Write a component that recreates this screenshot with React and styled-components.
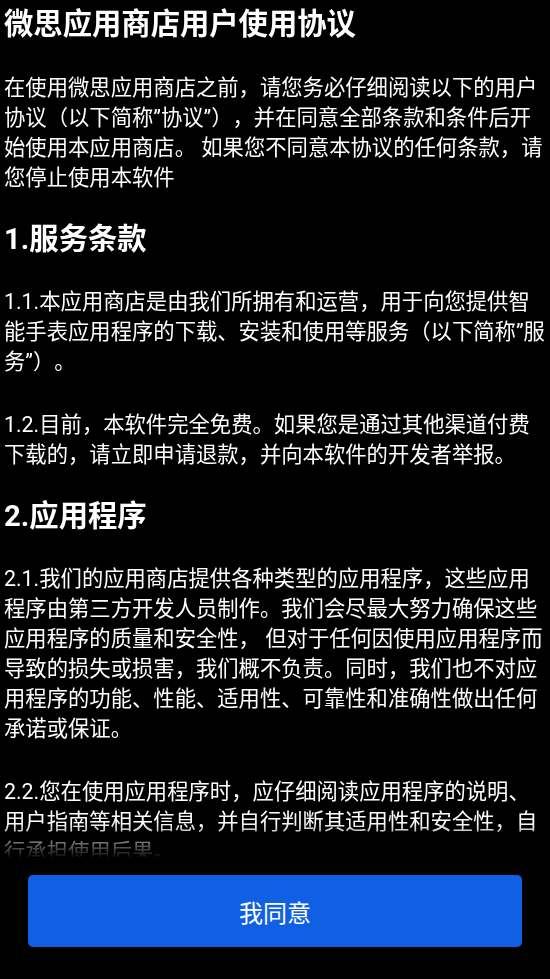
import React from "react";
import styled, { createGlobalStyle } from "styled-components";

const GlobalStyle = createGlobalStyle`
  html, body {
    margin: 0;
    padding: 0;
    background: #000;
  }
  body {
    font-family: Roboto, "Noto Sans CJK SC", sans-serif;
    color: #fff;
    text-spacing-trim: space-all;
  }
  * { box-sizing: border-box; }
`;

const Page = styled.div`
  width: 550px;
  height: 979px;
  display: flex;
  flex-direction: column;
  background: #000;
  overflow: hidden;
`;

const Content = styled.div`
  flex: 1;
  min-height: 0;
  overflow: hidden;
  padding: 0 5px 0 4px;
  text-spacing-trim: space-all;
  -webkit-mask-image: linear-gradient(to bottom, #000 calc(100% - 34px), rgba(0, 0, 0, 0.05) 100%);
  mask-image: linear-gradient(to bottom, #000 calc(100% - 34px), rgba(0, 0, 0, 0.05) 100%);
`;

const Title = styled.h1`
  margin: 4px 0 0;
  font-size: 29.33px;
  line-height: 40px;
  font-weight: 700;
  color: #fff;
`;

const Heading = styled.h2`
  margin: 26px 0 0;
  font-size: 29.33px;
  line-height: 40px;
  font-weight: 700;
  color: #fff;
`;

const Paragraph = styled.p`
  margin: 33px 0 0;
  font-size: 21.33px;
  line-height: 30px;
  font-weight: 400;
  color: #fff;

  ${Title} + & {
    margin-top: 29px;
  }
  ${Heading} + & {
    margin-top: 28px;
  }
`;

const Footer = styled.div`
  flex: none;
  padding: 18px 28px 32px;
`;

const AgreeButton = styled.button`
  display: flex;
  align-items: center;
  justify-content: center;
  width: 100%;
  height: 72px;
  border: none;
  border-radius: 5px;
  background: #1060e6;
  color: #fff;
  font-family: Roboto, "Noto Sans CJK SC", sans-serif;
  font-size: 24px;
  font-weight: 400;
  cursor: pointer;
`;

const sections = [
  {
    heading: "1.服务条款",
    paragraphs: [
      "1.1.本应用商店是由我们所拥有和运营，用于向您提供智能手表应用程序的下载、安装和使用等服务（以下简称”服务”）。",
      "1.2.目前，本软件完全免费。如果您是通过其他渠道付费下载的，请立即申请退款，并向本软件的开发者举报。",
    ],
  },
  {
    heading: "2.应用程序",
    paragraphs: [
      "2.1.我们的应用商店提供各种类型的应用程序，这些应用程序由第三方开发人员制作。我们会尽最大努力确保这些应用程序的质量和安全性， 但对于任何因使用应用程序而导致的损失或损害，我们概不负责。同时，我们也不对应用程序的功能、性能、适用性、可靠性和准确性做出任何承诺或保证。",
      "2.2.您在使用应用程序时，应仔细阅读应用程序的说明、用户指南等相关信息，并自行判断其适用性和安全性，自行承担使用后果。",
    ],
  },
];

export default function App() {
  return (
    <>
      <GlobalStyle />
      <Page lang="zh-CN">
        <Content>
          <Title>微思应用商店用户使用协议</Title>
          <Paragraph>
            在使用微思应用商店之前，请您务必仔细阅读以下的用户协议（以下简称”协议”），并在同意全部条款和条件后开始使用本应用商店。 如果您不同意本协议的任何条款，请您停止使用本软件
          </Paragraph>
          {sections.map((s) => (
            <React.Fragment key={s.heading}>
              <Heading>{s.heading}</Heading>
              {s.paragraphs.map((p) => (
                <Paragraph key={p}>{p}</Paragraph>
              ))}
            </React.Fragment>
          ))}
        </Content>
        <Footer>
          <AgreeButton type="button">我同意</AgreeButton>
        </Footer>
      </Page>
    </>
  );
}
